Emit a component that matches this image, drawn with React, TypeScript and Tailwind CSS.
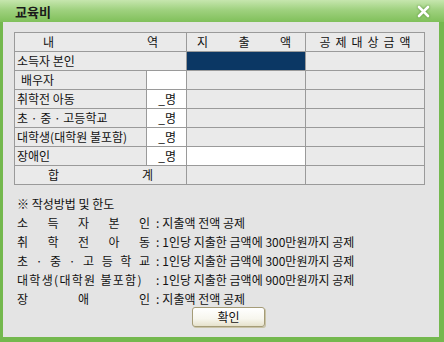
import React from 'react'

const font = { fontFamily: '"Noto Sans CJK KR", "Noto Sans", sans-serif' }

type Row = {
  label: string
  count?: boolean
  spend?: 'navy' | 'white'
  indent?: boolean
}

const rows: Row[] = [
  { label: '소득자 본인', spend: 'navy' },
  { label: '배우자', indent: true },
  { label: '취학전 아동', count: true },
  { label: '초 · 중 · 고등학교', count: true },
  { label: '대학생(대학원 불포함)', count: true },
  { label: '장애인', count: true, spend: 'white' },
]

const guide: { label: string; text: string; tight?: boolean }[] = [
  { label: '소 득 자 본 인', text: '지출액 전액 공제' },
  { label: '취 학 전 아 동', text: '1인당 지출한 금액에 300만원까지 공제' },
  { label: '초 · 중 · 고 등 학 교', text: '1인당 지출한 금액에 300만원까지 공제' },
  { label: '대학생(대학원 불포함)', text: '1인당 지출한 금액에 900만원까지 공제', tight: true },
  { label: '장 애 인', text: '지출액 전액 공제' },
]

const cell = 'h-[19px] border-r border-b border-[#9a9a9a] bg-[#eaeaea] flex items-center'

export default function App() {
  return (
    <div className="w-[444px] h-[342px] flex flex-col text-[12px] text-[#111]" style={font}>
      {/* 타이틀바 */}
      <div className="h-[22px] flex items-center justify-between pl-[15px] pr-[14px] bg-[linear-gradient(180deg,#c6e6ae_0%,#9fd17f_45%,#80c05a_100%)]">
        <span className="text-[13px] font-bold leading-none text-[#1a1a1a]">교육비</span>
        <svg width="13" height="13" viewBox="0 0 13 13" className="drop-shadow-[0_0_1px_#4f8a2e]">
          <path d="M2 2 L11 11 M11 2 L2 11" stroke="#fff" strokeWidth="2.6" strokeLinecap="round" />
        </svg>
      </div>

      {/* 본문 */}
      <div className="flex-1 flex flex-col bg-[#e4e4e4] border-l-[3px] border-r-[5px] border-b-[5px] border-[#74b84e] pl-[11px] pt-[10px]">
        <div className="grid grid-cols-[132px_40px_119px_119px] w-[411px] border-l border-t border-[#9a9a9a]">
          {/* 헤더 */}
          <div className={`${cell} col-span-2 justify-between px-[28px]`}>
            <span>내</span>
            <span>역</span>
          </div>
          <div className={`${cell} justify-between pl-[10px] pr-[14px]`}>
            <span>지</span>
            <span>출</span>
            <span>액</span>
          </div>
          <div className={`${cell} justify-center tracking-[5px] pl-[5px]`}>공제대상금액</div>

          {rows.map((r, i) =>
            r.spend === 'navy' ? (
              <React.Fragment key={i}>
                <div className={`${cell} col-span-2 pl-[2px]`}>{r.label}</div>
                <div className={`${cell} !bg-[#0b3764]`} />
                <div className={cell} />
              </React.Fragment>
            ) : (
              <React.Fragment key={i}>
                <div className={`${cell} ${r.indent ? 'pl-[6px]' : 'pl-[2px]'} whitespace-nowrap`}>{r.label}</div>
                <div className={`${cell} !bg-white justify-end pr-[10px]`}>{r.count ? '_명' : ''}</div>
                <div className={`${cell} ${r.spend === 'white' ? '!bg-white' : ''}`} />
                <div className={cell} />
              </React.Fragment>
            )
          )}

          {/* 합계 */}
          <div className={`${cell} col-span-2 justify-between pl-[33px] pr-[33px]`}>
            <span>합</span>
            <span>계</span>
          </div>
          <div className={cell} />
          <div className={cell} />
        </div>

        {/* 작성방법 */}
        <div className="mt-[9px] pl-[3px] leading-[19px]">
          <div>※ 작성방법 및 한도</div>
          {guide.map((g) => (
            <div key={g.label} className="flex whitespace-nowrap">
              <span
                className={`w-[133px] ${g.tight ? 'tracking-[1.3px]' : '[text-align-last:justify]'}`}
              >
                {g.label}
              </span>
              <span className="ml-[6px]">:</span>
              <span className="ml-[3px]">{g.text}</span>
            </div>
          ))}
        </div>

        <button
          type="button"
          className="ml-[178px] mt-[-1px] w-[73px] h-[20px] rounded-[3px] border border-[#a59c78] bg-[linear-gradient(180deg,#ffffff_0%,#f7f6ee_60%,#e6e2cc_100%)] shadow-[1px_1px_0_#c9c3a6] text-[12px] leading-none"
          style={font}
        >
          확인
        </button>
      </div>
    </div>
  )
}
